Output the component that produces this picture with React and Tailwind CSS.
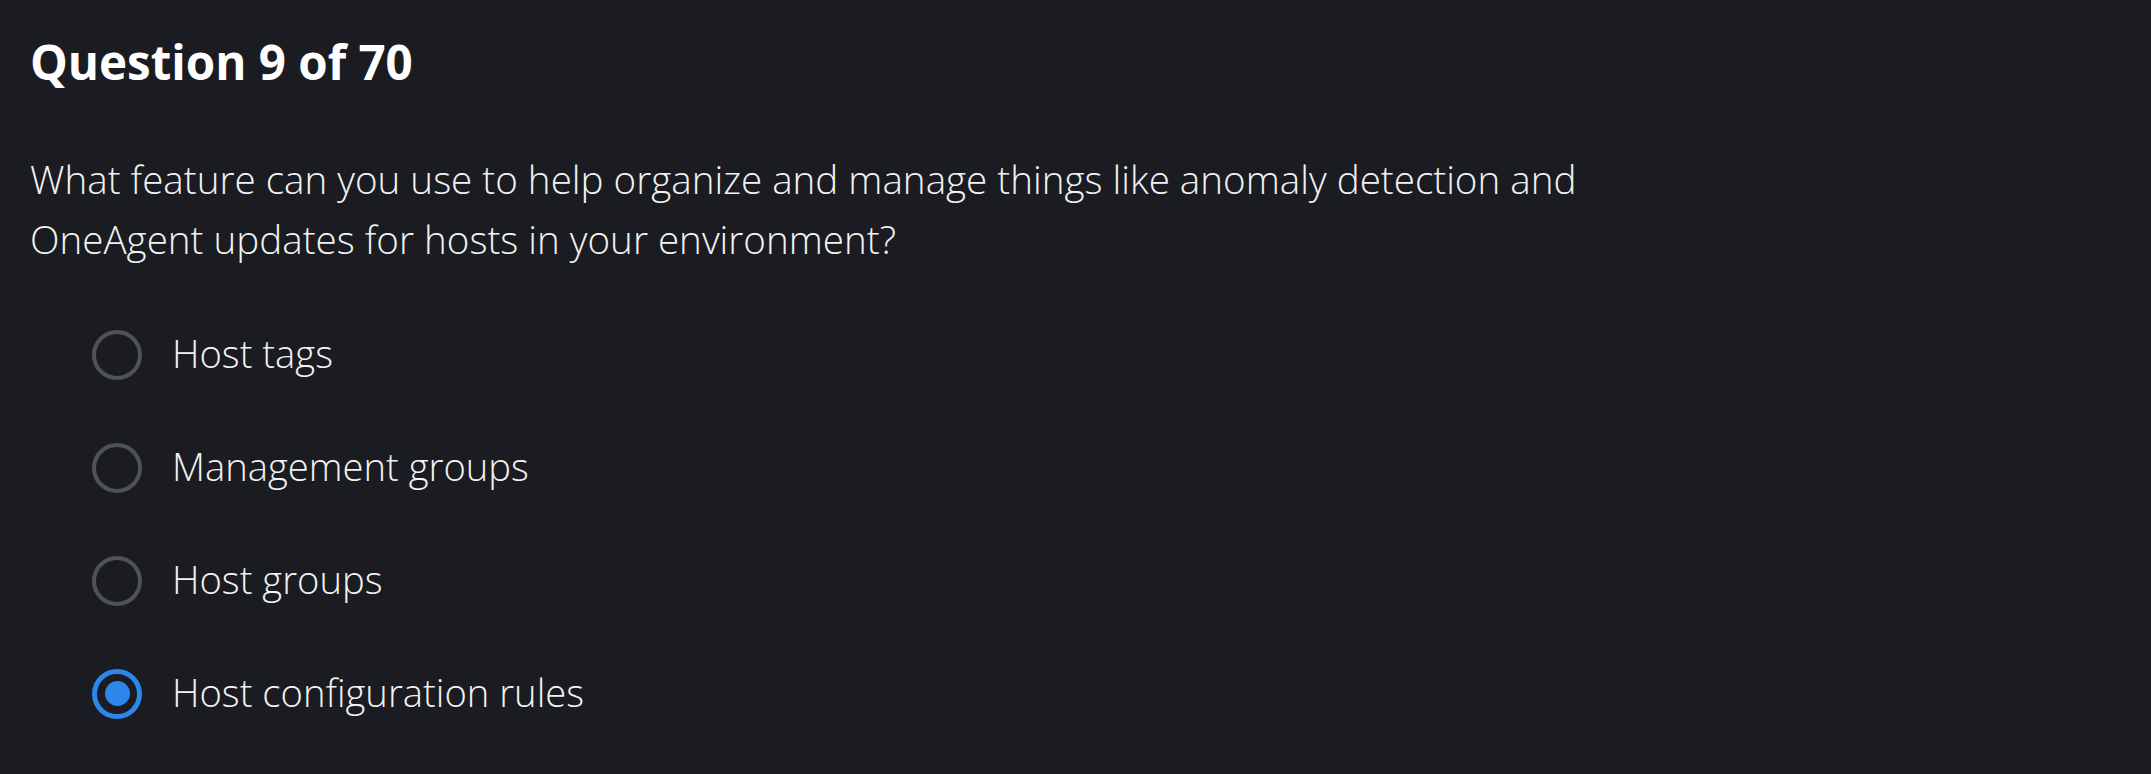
import React from "react";

const options = [
  { label: "Host tags", selected: false },
  { label: "Management groups", selected: false },
  { label: "Host groups", selected: false },
  { label: "Host configuration rules", selected: true },
];

function Radio({ selected }) {
  if (selected) {
    return (
      <span className="flex h-[50px] w-[50px] shrink-0 items-center justify-center rounded-full border-[5px] border-[#2b87eb]">
        <span className="h-[25px] w-[25px] rounded-full bg-[#2b87eb]" />
      </span>
    );
  }
  return <span className="h-[50px] w-[50px] shrink-0 rounded-full border-[4px] border-[#4f5258]" />;
}

export default function App() {
  return (
    <div
      className="min-h-screen w-full bg-[#1a1c21] pl-[30px] pt-[34px] text-[#f2f2f2]"
      style={{ fontFamily: '"Open Sans", "Noto Sans", sans-serif' }}
    >
      <h1 className="text-[47.5px] font-bold leading-[56px] text-white">Question 9 of 70</h1>
      <p className="mt-[59px] text-[38.6px] font-light leading-[60px]">
        What feature can you use to help organize and manage things like anomaly detection and
        <br />
        OneAgent updates for hosts in your environment?
      </p>
      <div className="mt-[29px] flex flex-col pl-[62px]">
        {options.map((o) => (
          <label key={o.label} className="flex h-[113px] items-center gap-[30px]">
            <Radio selected={o.selected} />
            <span className="mb-[3px] text-[38.2px] font-light leading-[56px]">{o.label}</span>
          </label>
        ))}
      </div>
    </div>
  );
}
